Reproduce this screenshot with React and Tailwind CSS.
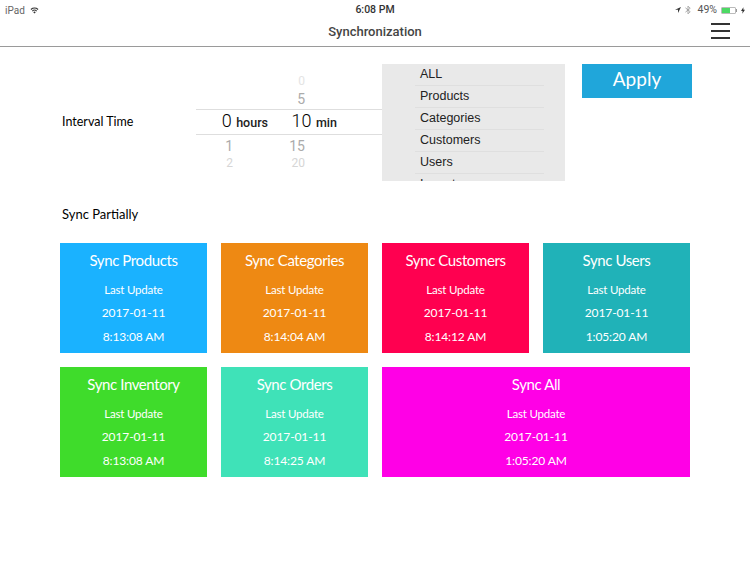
import React from "react";

const cards = [
  { title: "Sync Products", date: "2017-01-11", time: "8:13:08 AM", color: "bg-[#1ab2ff]" },
  { title: "Sync Categories", date: "2017-01-11", time: "8:14:04 AM", color: "bg-[#ee8913]" },
  { title: "Sync Customers", date: "2017-01-11", time: "8:14:12 AM", color: "bg-[#ff0050]" },
  { title: "Sync Users", date: "2017-01-11", time: "1:05:20 AM", color: "bg-[#20b2b8]" },
  { title: "Sync Inventory", date: "2017-01-11", time: "8:13:08 AM", color: "bg-[#3fdc2b]" },
  { title: "Sync Orders", date: "2017-01-11", time: "8:14:25 AM", color: "bg-[#3fe2b8]" },
  { title: "Sync All", date: "2017-01-11", time: "1:05:20 AM", color: "bg-[#ff00e6]", wide: true },
];

function Card({ title, date, time, color, wide }) {
  return (
    <div className={`${color} ${wide ? "col-span-2" : ""} h-[110px] flex flex-col items-center text-white pt-[6px]`}>
      <div className="text-[15px] leading-[22px] tracking-[-0.4px]">{title}</div>
      <div className="text-[11.5px] leading-[23px] mt-[7px] tracking-[-0.2px]">Last Update</div>
      <div className="text-[12px] leading-[23px] tracking-[-0.1px]">{date}</div>
      <div className="text-[12px] leading-[23px] mt-[1px] tracking-[-0.1px]">{time}</div>
    </div>
  );
}

function PickerRow({ left, right, className }) {
  return (
    <div className={`flex ${className}`}>
      <div className="w-[37px] text-right">{left}</div>
      <div className="w-[72px] text-right">{right}</div>
    </div>
  );
}

function Picker() {
  return (
    <div className="w-[186px] h-[104px] overflow-hidden flex flex-col font-['Roboto',sans-serif]">
      <div className="h-[45px] shrink-0 flex flex-col">
        <PickerRow right="0" className="h-[26px] text-[12px] leading-[34px] text-[#e4e4e4] pr-[1px]" />
        <PickerRow right="5" className="h-[19px] text-[14px] leading-[18px] text-[#ababab]" />
      </div>
      <div className="h-[26px] shrink-0 border-y border-[#dedede] flex items-center text-black">
        <div className="w-[72px] text-right text-[18px] font-light leading-[24px]">
          0 <span className="text-[12.5px] font-medium text-[#222]">hours</span>
        </div>
        <div className="w-[69px] text-right text-[18px] font-light leading-[24px]">
          10 <span className="text-[12.5px] font-medium text-[#222]">min</span>
        </div>
      </div>
      <PickerRow left="1" right="15" className="h-[20px] shrink-0 mt-[1px] text-[14px] leading-[20px] text-[#ababab]" />
      <PickerRow left="2" right="20" className="h-[12px] shrink-0 text-[12px] leading-[14px] text-[#d6d6d6]" />
    </div>
  );
}

export default function App() {
  return (
    <div className="w-[750px] h-[562px] bg-white overflow-hidden font-['Lato',sans-serif] text-black">
      <div className="h-[20px] flex items-center justify-between px-[5px] text-[10.5px] font-['Roboto',sans-serif] text-[#333]">
        <div className="flex items-center gap-[5px] w-[200px] text-[#666]">
          <span className="text-[10px]">iPad</span>
          <svg width="9" height="7" viewBox="0 0 13 10" fill="#333">
            <path d="M6.5 9.5 4.7 7.4a2.6 2.6 0 0 1 3.6 0ZM3.8 6.4 2.8 5.2a5.6 5.6 0 0 1 7.4 0L9.2 6.4a4 4 0 0 0-5.4 0ZM1.9 4.2.8 3a8.6 8.6 0 0 1 11.4 0l-1.1 1.2a7 7 0 0 0-9.2 0Z" />
          </svg>
        </div>
        <span className="font-medium text-[#333]">6:08 PM</span>
        <div className="w-[200px] flex items-center justify-end gap-[4px] pr-[-1px]">
          <svg width="6" height="6" viewBox="0 0 8 8" fill="#333"><path d="M8 0 0 3.5h4V8Z" /></svg>
          <svg width="6" height="10" viewBox="0 0 7 11" fill="none" stroke="#999" strokeWidth="1"><path d="M.5 3 6 7.5 3.5 10V1L6 3.5.5 8" /></svg>
          <span className="text-[#555] ml-[2px]">49%</span>
          <div className="flex items-center">
            <div className="w-[15px] h-[7px] border border-[#bbb] rounded-[1px] flex">
              <div className="w-[8px] bg-[#4cd964]" />
            </div>
            <div className="w-[1px] h-[3px] bg-[#999]" />
          </div>
          <svg width="4" height="7" viewBox="0 0 5 8" fill="#333"><path d="M3 0 0 4.6h2L1.6 8 5 3.2H3Z" /></svg>
        </div>
      </div>

      <div className="h-[27px] border-b border-[#9a9a9a] relative flex items-center justify-center">
        <span className="text-[13px] font-medium text-[#444] font-['Roboto',sans-serif] pb-[2px]">Synchronization</span>
        <div className="absolute right-[20px] top-[3px] w-[19px] flex flex-col gap-[5px]">
          <div className="h-[2px] bg-[#333]" />
          <div className="h-[2px] bg-[#333]" />
          <div className="h-[2px] bg-[#333]" />
        </div>
      </div>

      <div className="flex mt-[17px] h-[117px]">
        <div className="w-[196px] pl-[62px] pt-[49px] text-[12.5px] leading-[18px]">Interval Time</div>
        <Picker />
        <div className="w-[183px] h-[117px] bg-[#e9e9e9] overflow-hidden pl-[33px] pr-[21px] font-['Liberation_Sans',sans-serif] text-[12.5px] text-[#222]">
          {["ALL", "Products", "Categories", "Customers", "Users", "Import"].map((item) => (
            <div key={item} className="h-[22px] leading-[20px] pl-[5px] border-b border-[#dfdfdf]">{item}</div>
          ))}
        </div>
        <div className="ml-[17px] w-[110px] h-[34px] bg-[#20a6da] text-white text-[19px] flex items-center justify-center pb-[3px]">Apply</div>
      </div>

      <div className="mt-[24px] pl-[62px] text-[13px] leading-[18px]">Sync Partially</div>

      <div className="ml-[60px] mt-[20px] w-[630px] grid grid-cols-4 gap-[14px]">
        {cards.map((c) => (
          <Card key={c.title} {...c} />
        ))}
      </div>
    </div>
  );
}
